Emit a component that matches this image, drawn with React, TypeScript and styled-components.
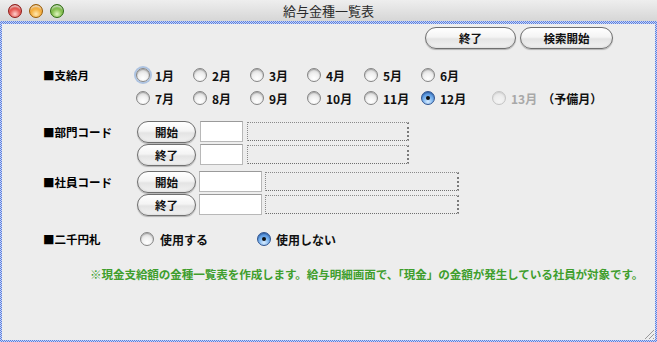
import React from 'react';
import styled, { createGlobalStyle, css } from 'styled-components';

const GlobalStyle = createGlobalStyle`
  html, body { margin: 0; padding: 0; background: #ededed; }
  body { font-family: "Noto Sans CJK JP", "Noto Sans", sans-serif; color: #000; }
  * { box-sizing: border-box; }
`;

const Window = styled.div`
  position: relative;
  width: 657px;
  height: 342px;
  display: flex;
  flex-direction: column;
  background: #ededed;
  overflow: hidden;
`;

const TitleBar = styled.div`
  flex: none;
  height: 21px;
  display: grid;
  grid-template-columns: 1fr auto 1fr;
  align-items: center;
  background: linear-gradient(#eeeeee, #d6d6d6);
`;

const Lights = styled.div`
  display: flex;
  gap: 7px;
  padding-left: 8px;
  padding-top: 1px;
`;

const lightColors = {
  red: ['#ffd0cc', '#e0443e', '#8e1b17'],
  yellow: ['#ffe8b0', '#f3a52a', '#9a5c05'],
  green: ['#e0f6c0', '#74b53a', '#2f6d12'],
};

const Light = styled.span<{ $c: keyof typeof lightColors }>`
  width: 14px;
  height: 14px;
  border-radius: 50%;
  ${({ $c }) => css`
    background: radial-gradient(circle at 50% 75%, ${lightColors[$c][0]} 0%, ${lightColors[$c][1]} 55%, ${lightColors[$c][2]} 100%);
    border: 1px solid ${lightColors[$c][2]};
  `}
  box-shadow: inset 0 3px 2px -1px rgba(255, 255, 255, 0.7);
`;

const Title = styled.div`
  font-size: 13px;
  color: #2a2a2a;
  line-height: 21px;
`;

const FocusFrame = styled.div`
  flex: 1;
  display: flex;
  padding: 3px 2px 2px 2px;
  background: repeating-conic-gradient(#5a7fe0 0 25%, #c9d5f5 0 50%) 0 0 / 2px 2px;
`;

const Panel = styled.div`
  flex: 1;
  display: flex;
  flex-direction: column;
  background: #ededed;
`;

const Toolbar = styled.div`
  display: flex;
  justify-content: flex-end;
  gap: 4px;
  padding: 3px 42px 0 0;
`;

const PillButton = styled.button<{ $w: number }>`
  width: ${({ $w }) => $w}px;
  height: 22px;
  padding: 0;
  border: 1px solid #6f6f6f;
  border-radius: 11px;
  background: linear-gradient(#ffffff 0%, #f4f4f4 45%, #e4e4e4 55%, #f2f2f2 100%);
  box-shadow: 0 1px 1px rgba(0, 0, 0, 0.25), inset 0 -1px 2px rgba(0, 0, 0, 0.08);
  font-family: inherit;
  font-size: 11.5px;
  font-weight: 700;
  color: #111;
  line-height: 20px;
  cursor: default;
`;

const Form = styled.div`
  display: flex;
  flex-direction: column;
  padding-left: 41px;
`;

const Section = styled.div<{ $mt: number }>`
  display: grid;
  grid-template-columns: 93px 1fr;
  margin-top: ${({ $mt }) => $mt}px;
`;

const SectionLabel = styled.div<{ $h: number }>`
  height: ${({ $h }) => $h}px;
  display: flex;
  align-items: center;
  font-size: 11.5px;
  font-weight: 700;
  white-space: nowrap;
`;

const Rows = styled.div<{ $gap: number }>`
  display: flex;
  flex-direction: column;
  gap: ${({ $gap }) => $gap}px;
`;

const RadioRow = styled.div`
  display: flex;
  align-items: center;
  height: 20px;
`;

const RadioItem = styled.label<{ $w?: number; $ml?: number; $gap?: number }>`
  display: flex;
  align-items: center;
  gap: ${({ $gap }) => $gap ?? 5}px;
  width: ${({ $w }) => ($w ? `${$w}px` : 'auto')};
  margin-left: ${({ $ml }) => $ml ?? 0}px;
  flex: none;
  white-space: nowrap;
`;

const RadioCircle = styled.span<{ $checked?: boolean; $focus?: boolean; $disabled?: boolean }>`
  position: relative;
  width: 14px;
  height: 14px;
  flex: none;
  border-radius: 50%;
  border: 1px solid #858585;
  background: radial-gradient(circle at 50% 78%, #ffffff 0%, #f0f0f0 45%, #c9c9c9 100%);
  box-shadow: inset 0 1px 1px rgba(0, 0, 0, 0.25);
  ${({ $checked }) =>
    $checked &&
    css`
      border-color: #2e5390;
      background: radial-gradient(circle at 50% 80%, #d8ecff 0%, #78b2ee 45%, #2f6ec9 100%);
      &::after {
        content: '';
        position: absolute;
        left: 4px;
        top: 4px;
        width: 4px;
        height: 4px;
        border-radius: 50%;
        background: #111;
      }
    `}
  ${({ $focus }) =>
    $focus &&
    css`
      box-shadow: inset 0 1px 1px rgba(0, 0, 0, 0.25), 0 0 0 2px rgba(120, 160, 215, 0.55);
    `}
  ${({ $disabled }) =>
    $disabled &&
    css`
      opacity: 0.4;
    `}
`;

const RadioText = styled.span<{ $muted?: boolean }>`
  font-size: 12px;
  font-weight: 700;
  color: ${({ $muted }) => ($muted ? '#a8a8a8' : '#111')};
`;

const Extra = styled.span`
  font-size: 12px;
  font-weight: 700;
  color: #111;
`;

const CodeRow = styled.div<{ $gap: number }>`
  display: flex;
  align-items: center;
  gap: ${({ $gap }) => $gap}px;
  height: 21px;
  padding-left: 1px;
`;

const InputBox = styled.div<{ $w: number }>`
  width: ${({ $w }) => $w}px;
  height: 21px;
  background: #fff;
  border: 1px solid #b8b8b8;
  border-top-color: #9a9a9a;
`;

const DottedBox = styled.div<{ $w: number }>`
  width: ${({ $w }) => $w}px;
  height: 19px;
  border: 1px dotted #8a8a8a;
  border-right: 2px dotted #7a7a7a;
  border-bottom: 1px dotted #6f6f6f;
`;

const Note = styled.div`
  margin-top: 17px;
  padding-left: 88px;
  font-size: 11.6px;
  font-weight: 700;
  letter-spacing: -0.12px;
  color: #3f9e2d;
  white-space: nowrap;
  line-height: 16px;
`;

const Grip = styled.svg`
  position: absolute;
  right: 2px;
  bottom: 2px;
`;

const months1 = ['1月', '2月', '3月', '4月', '5月', '6月'];
const months2 = ['7月', '8月', '9月', '10月', '11月', '12月'];

export default function App() {
  return (
    <>
      <GlobalStyle />
      <Window>
        <TitleBar>
          <Lights>
            <Light $c="red" />
            <Light $c="yellow" />
            <Light $c="green" />
          </Lights>
          <Title>給与金種一覧表</Title>
          <div />
        </TitleBar>
        <FocusFrame>
          <Panel>
            <Toolbar>
              <PillButton $w={91}>終了</PillButton>
              <PillButton $w={93}>検索開始</PillButton>
            </Toolbar>
            <Form>
              <Section $mt={16}>
                <SectionLabel $h={20}>■支給月</SectionLabel>
                <Rows $gap={3}>
                  <RadioRow>
                    {months1.map((m, i) => (
                      <RadioItem key={m} $w={57}>
                        <RadioCircle $focus={i === 0} />
                        <RadioText>{m}</RadioText>
                      </RadioItem>
                    ))}
                  </RadioRow>
                  <RadioRow>
                    {months2.map((m) => (
                      <RadioItem key={m} $w={57}>
                        <RadioCircle $checked={m === '12月'} />
                        <RadioText>{m}</RadioText>
                      </RadioItem>
                    ))}
                    <RadioItem $ml={14}>
                      <RadioCircle $disabled />
                      <RadioText $muted>13月</RadioText>
                      <Extra>（予備月）</Extra>
                    </RadioItem>
                  </RadioRow>
                </Rows>
              </Section>

              <Section $mt={13}>
                <SectionLabel $h={21}>■部門コード</SectionLabel>
                <Rows $gap={2}>
                  <CodeRow $gap={4}>
                    <PillButton $w={59}>開始</PillButton>
                    <InputBox $w={43} />
                    <DottedBox $w={162} />
                  </CodeRow>
                  <CodeRow $gap={4}>
                    <PillButton $w={59}>終了</PillButton>
                    <InputBox $w={43} />
                    <DottedBox $w={162} />
                  </CodeRow>
                </Rows>
              </Section>

              <Section $mt={6}>
                <SectionLabel $h={21}>■社員コード</SectionLabel>
                <Rows $gap={2}>
                  <CodeRow $gap={3}>
                    <PillButton $w={59}>開始</PillButton>
                    <InputBox $w={63} />
                    <DottedBox $w={194} />
                  </CodeRow>
                  <CodeRow $gap={3}>
                    <PillButton $w={59}>終了</PillButton>
                    <InputBox $w={63} />
                    <DottedBox $w={194} />
                  </CodeRow>
                </Rows>
              </Section>

              <Section $mt={14}>
                <SectionLabel $h={20}>■二千円札</SectionLabel>
                <RadioRow>
                  <RadioItem $w={117} $ml={4} $gap={6}>
                    <RadioCircle />
                    <RadioText>使用する</RadioText>
                  </RadioItem>
                  <RadioItem $gap={5}>
                    <RadioCircle $checked />
                    <RadioText>使用しない</RadioText>
                  </RadioItem>
                </RadioRow>
              </Section>
            </Form>
            <Note>
              ※現金支給額の金種一覧表を作成します。給与明細画面で、「現金」の金額が発生している社員が対象です。
            </Note>
          </Panel>
        </FocusFrame>
        <Grip width="12" height="12" viewBox="0 0 12 12">
          <line x1="11" y1="2" x2="2" y2="11" stroke="#9a9a9a" strokeWidth="1" />
          <line x1="11" y1="6" x2="6" y2="11" stroke="#9a9a9a" strokeWidth="1" />
          <line x1="11" y1="10" x2="10" y2="11" stroke="#9a9a9a" strokeWidth="1" />
        </Grip>
      </Window>
    </>
  );
}
